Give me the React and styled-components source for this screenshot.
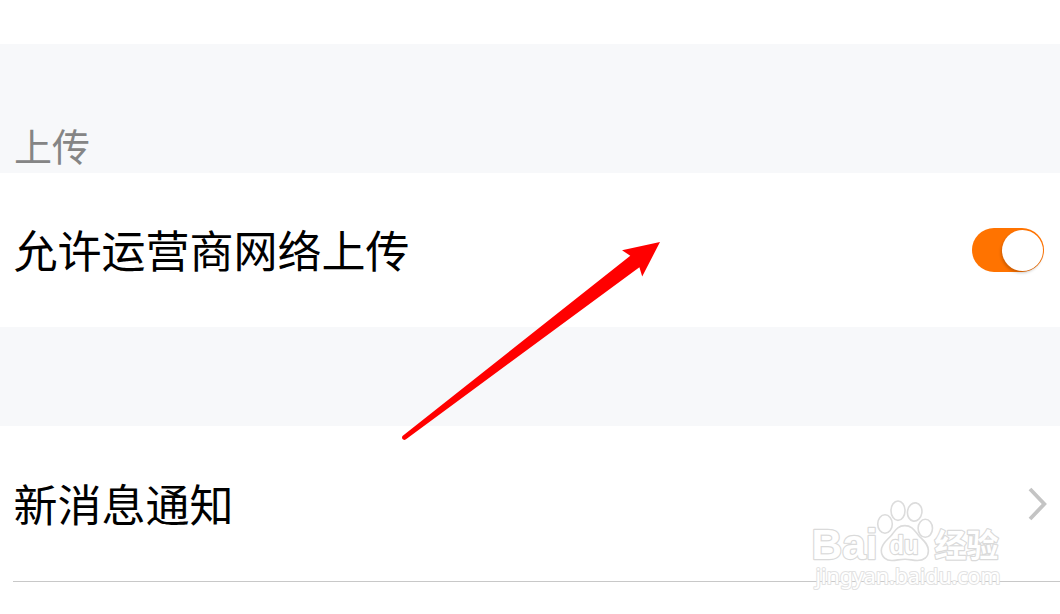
import styled, { createGlobalStyle } from 'styled-components';

const App = () => {
  return (
    <>
      <GlobalStyle />
      <StyledPage>
        <StyledTopBar />
        <StyledSectionHeader>
          <h3>上传</h3>
        </StyledSectionHeader>

        <StyledRow $height={154}>
          <p>允许运营商网络上传</p>
          <StyledSwitch role="switch" aria-checked="true">
            <span />
          </StyledSwitch>
        </StyledRow>

        <StyledGap />

        <StyledRow $height={155}>
          <p>新消息通知</p>
          <Chevron />
        </StyledRow>
        <StyledDivider />

        <Arrow />
        <Watermark />
      </StyledPage>
    </>
  )
}

export default App;

const Chevron = () => (
  <StyledChevron viewBox="0 0 20 34">
    <path d="M2 2 L16.3 17 L2 32" fill="none" stroke="#c4c4c4" strokeWidth="3.8" />
  </StyledChevron>
)

const Arrow = () => (
  <StyledArrow viewBox="0 0 262 202">
    <path
      d="M260 2 L222 10.3 L230.3 15.8 L2.8 195.8 Q1.4 197.3 2.5 199.1 Q4 200.6 6 199.2 L239.4 27.3 L242.2 36.5 Z"
      fill="#ff0000"
    />
  </StyledArrow>
)

const Watermark = () => (
  <StyledWatermark viewBox="0 0 200 100">
    <g fill="#ffffff" stroke="#dcdcdc" strokeWidth="1.6">
      <ellipse cx="75" cy="34" rx="7.3" ry="9.3" />
      <ellipse cx="88" cy="20.7" rx="7" ry="9.7" />
      <ellipse cx="104.7" cy="22" rx="7.2" ry="9.2" transform="rotate(8 104.7 22)" />
      <ellipse cx="115.3" cy="38.3" rx="7.2" ry="9" />
      <path d="M94.8 35.6 C87.5 35.6 85.3 40.5 81.5 45.2 C77.7 49.8 71.3 53.2 71.3 60.6 C71.3 67 76.4 70.8 82.3 70.5 C87.2 70.2 90.2 69.2 95 69.2 C99.7 69.2 102.7 70.5 107.4 70.5 C113.7 70.5 118.4 67.3 118.4 60.8 C118.4 53 112.2 49.8 108.4 45.2 C104.5 40.5 102 35.6 94.8 35.6 Z" />
    </g>
    <StyledMark x="1.5" y="69" textLength="66" lengthAdjust="spacingAndGlyphs" $size={42}>Bai</StyledMark>
    <StyledMark x="79.5" y="64" textLength="29" lengthAdjust="spacingAndGlyphs" $size={25}>du</StyledMark>
    <StyledMark x="124.5" y="67" textLength="64" lengthAdjust="spacingAndGlyphs" $size={32}>经验</StyledMark>
    <StyledSite x="5.5" y="94" textLength="185" lengthAdjust="spacingAndGlyphs">jingyan.baidu.com</StyledSite>
  </StyledWatermark>
)

const GlobalStyle = createGlobalStyle`
    *{
        margin: 0;
        padding: 0;
        box-sizing: border-box;
    }

    body{
        background-color: #ffffff;
        font-family: 'Noto Sans CJK SC', sans-serif;
        overflow: hidden;
    }
`

const StyledPage = styled.main`
    position: relative;
    height: 614px;
    background-color: #ffffff;
    overflow: hidden;
`

const StyledTopBar = styled.div`
    height: 44px;
`

const StyledSectionHeader = styled.header`
    display: flex;
    align-items: flex-end;
    height: 129px;
    padding: 0 14px 8px;
    background-color: #f7f8fa;

    h3{
        color: #858585;
        font-size: 38px;
        font-weight: 400;
        line-height: 40px;
    }
`

const StyledRow = styled.section`
    display: flex;
    align-items: center;
    justify-content: space-between;
    height: ${({ $height }) => $height}px;
    padding: 0 12px 0 13.5px;

    p{
        padding-bottom: 2px;
        color: #000000;
        font-size: 44px;
        line-height: 64px;
    }
`

const StyledSwitch = styled.div`
    display: flex;
    justify-content: flex-end;
    width: 72px;
    height: 44px;
    margin: 0 4px 0 0;
    padding: 2px 1px;
    border-radius: 22px;
    background-color: #ff7300;

    span{
        width: 41px;
        height: 41px;
        border-radius: 50%;
        background-color: #ffffff;
        box-shadow: -1px 2px 3px rgba(0, 0, 0, 0.2);
    }
`

const StyledGap = styled.div`
    height: 99px;
    background-color: #f7f8fa;
`

const StyledDivider = styled.hr`
    height: 1px;
    margin-left: 13px;
    border: none;
    background-color: #c8c8c8;
`

const StyledChevron = styled.svg`
    width: 20px;
    height: 34px;
`

/* Pointer drawn over the rows */
const StyledArrow = styled.svg`
    position: absolute;
    top: 240px;
    left: 400px;
    width: 262px;
    height: 202px;
`

const StyledWatermark = styled.svg`
    position: absolute;
    top: 490px;
    left: 810px;
    width: 200px;
    height: 100px;
    overflow: visible;
`

const StyledMark = styled.text`
    fill: #ffffff;
    stroke: #dadada;
    stroke-width: 2.4px;
    stroke-linejoin: round;
    paint-order: stroke;
    font-family: 'Liberation Sans', 'Noto Sans CJK SC', sans-serif;
    font-size: ${({ $size }) => $size}px;
    font-weight: 700;
`

const StyledSite = styled.text`
    fill: #ffffff;
    stroke: #e2e2e2;
    stroke-width: 2px;
    stroke-linejoin: round;
    paint-order: stroke;
    font-family: 'Noto Sans', sans-serif;
    font-size: 21.5px;
    font-weight: 400;
`
